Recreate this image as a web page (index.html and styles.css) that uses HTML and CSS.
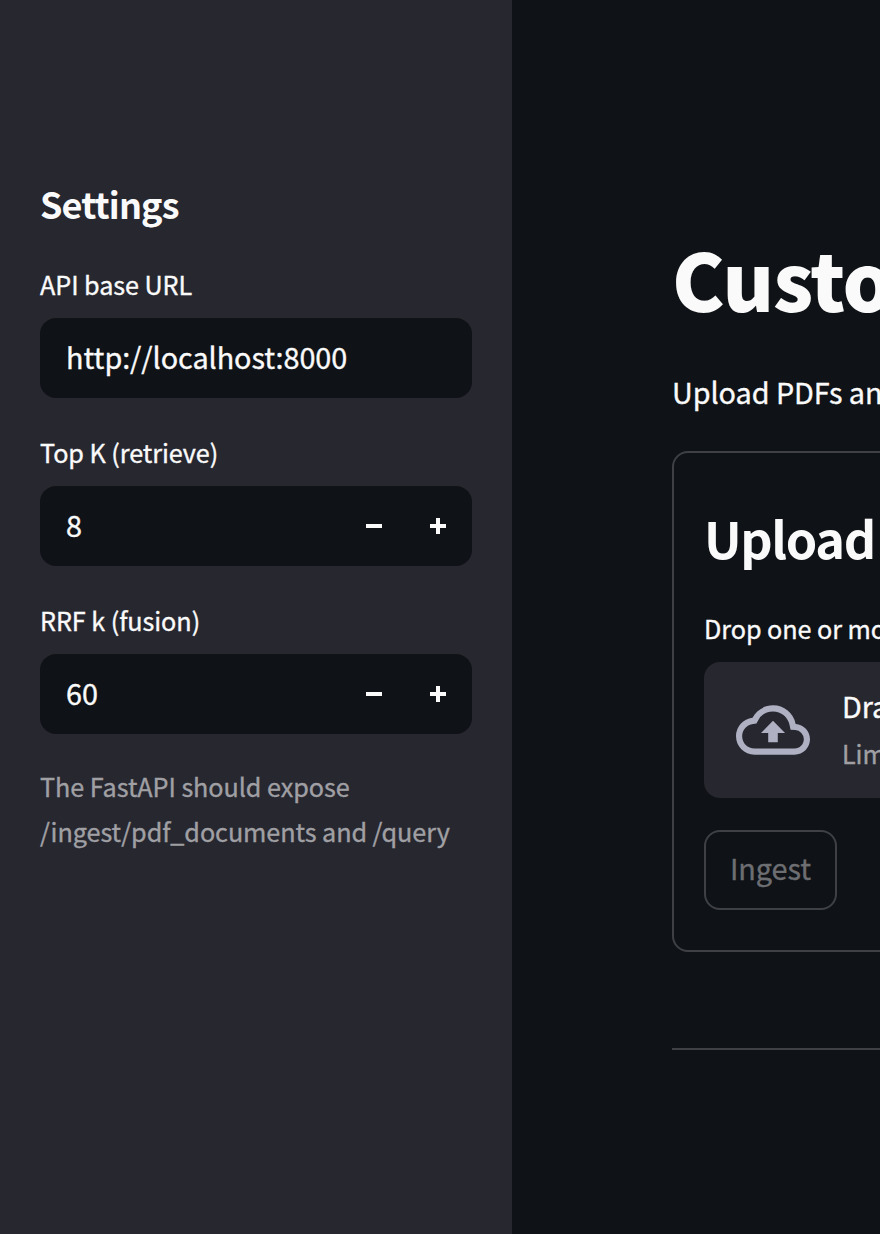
FILE: index.html
```html
<!DOCTYPE html>
<html lang="en">
<head>
<meta charset="utf-8">
<title>Settings</title>
<link rel="stylesheet" href="styles.css">
</head>
<body>
<div class="app">
  <aside class="sidebar">
    <h3 class="sidebar-title">Settings</h3>
    <div class="field">
      <div class="label">API base URL</div>
      <div class="input"><span class="value">http://localhost:8000</span></div>
    </div>
    <div class="field">
      <div class="label">Top K (retrieve)</div>
      <div class="input"><span class="value">8</span>
        <svg class="step" viewBox="0 0 16 16"><path d="M0 6h16v4H0z"/></svg>
        <svg class="step" viewBox="0 0 16 16"><path d="M0 6h6V0h4v6h6v4h-6v6H6v-6H0z"/></svg>
      </div>
    </div>
    <div class="field">
      <div class="label">RRF k (fusion)</div>
      <div class="input"><span class="value">60</span>
        <svg class="step" viewBox="0 0 16 16"><path d="M0 6h16v4H0z"/></svg>
        <svg class="step" viewBox="0 0 16 16"><path d="M0 6h6V0h4v6h6v4h-6v6H6v-6H0z"/></svg>
      </div>
    </div>
    <p class="caption">The FastAPI should expose<br>/ingest/pdf_documents and /query</p>
  </aside>
  <main class="main">
    <h1 class="title">Custo</h1>
    <p class="intro">Upload PDFs an</p>
    <section class="card">
      <h2 class="card-title">Upload</h2>
      <div class="label">Drop one or mo</div>
      <div class="dropzone">
        <svg class="cloud" viewBox="0 4 24 16"><path d="M19.35 10.04A7.49 7.49 0 0 0 12 4C9.11 4 6.6 5.64 5.35 8.04A5.994 5.994 0 0 0 0 14c0 3.31 2.69 6 6 6h13c2.76 0 5-2.24 5-5 0-2.64-2.05-4.78-4.65-4.96zM19 18H6c-2.21 0-4-1.79-4-4 0-2.05 1.53-3.76 3.56-3.97l1.07-.11.5-.95A5.469 5.469 0 0 1 12 6c2.62 0 4.88 1.86 5.39 4.43l.3 1.5 1.53.11A2.98 2.98 0 0 1 22 15c0 1.65-1.35 3-3 3zM8.1 13h2.35v3h3.1v-3h2.35L12 9z"/></svg>
        <div class="drop-text">
          <div class="drop-main">Dra</div>
          <div class="drop-limit">Lim</div>
        </div>
      </div>
      <button class="ingest" disabled>Ingest</button>
    </section>
    <hr class="divider">
  </main>
</div>
</body>
</html>
```
FILE: styles.css
```css
* { box-sizing: border-box; margin: 0; }
html { overflow: hidden; }
body {
  background: #0f1216;
  color: #fafafa;
  font-family: "Noto Sans CJK SC", "Noto Sans", sans-serif;
  font-size: 28.8px;
  letter-spacing: -0.06px;
  -webkit-text-stroke: 0.35px currentColor;
  overflow: hidden;
}
.app { display: flex; width: 880px; height: 1234px; overflow: hidden; white-space: nowrap; }
.sidebar { flex: none; width: 512px; padding: 179px 40px 0; background: #272730; }
.sidebar-title {
  margin-bottom: 41px;
  font-size: 36px;
  line-height: 48px;
  font-weight: 700;
  letter-spacing: -0.9px;
  -webkit-text-stroke: 0;
}
.field { margin-bottom: 38px; }
.label { margin-bottom: 18px; font-size: 25.2px; line-height: 32px; }
.input {
  display: flex;
  align-items: center;
  height: 80px;
  padding: 0 26px;
  border-radius: 16px;
  background: #0f1216;
}
.value { flex: 1; padding-bottom: 3px; line-height: 48px; }
.step { width: 16px; height: 16px; margin-left: 48px; fill: #fafafa; }
.caption { margin-top: -8px; font-size: 25.2px; line-height: 45px; color: #a0a0a4; }
.main { flex: 1; min-width: 0; padding: 225px 0 0 160px; overflow: hidden; }
.title {
  font-size: 79px;
  line-height: 106px;
  font-weight: 900;
  letter-spacing: -1.2px;
  -webkit-text-stroke: 0;
}
.intro { margin-top: 37px; line-height: 48px; }
.card {
  width: 600px;
  height: 501px;
  margin-top: 35px;
  padding: 50px 30px 0;
  border: 2px solid #3e4046;
  border-radius: 16px;
}
.card-title {
  margin: 1px 0 40px;
  font-size: 50.4px;
  line-height: 68px;
  font-weight: 700;
  letter-spacing: -1.4px;
  -webkit-text-stroke: 0;
}
.dropzone {
  display: flex;
  align-items: center;
  height: 136px;
  padding: 0 32px;
  border-radius: 16px;
  background: #272730;
}
.cloud { width: 74px; height: 50px; margin-right: 32px; fill: #afb1c3; }
.drop-text { padding-bottom: 3px; }
.drop-main { line-height: 48px; }
.drop-limit { font-size: 25.2px; line-height: 46px; color: #a0a0a4; }
.ingest {
  display: block;
  width: 133px;
  height: 80px;
  margin-top: 32px;
  padding: 0 0 5px;
  border: 2px solid #3e4046;
  border-radius: 16px;
  background: transparent;
  color: #6d6e72;
  font: inherit;
  letter-spacing: inherit;
}
.divider { width: 600px; height: 2px; margin-top: 96px; border: 0; background: #3e4046; }
```
